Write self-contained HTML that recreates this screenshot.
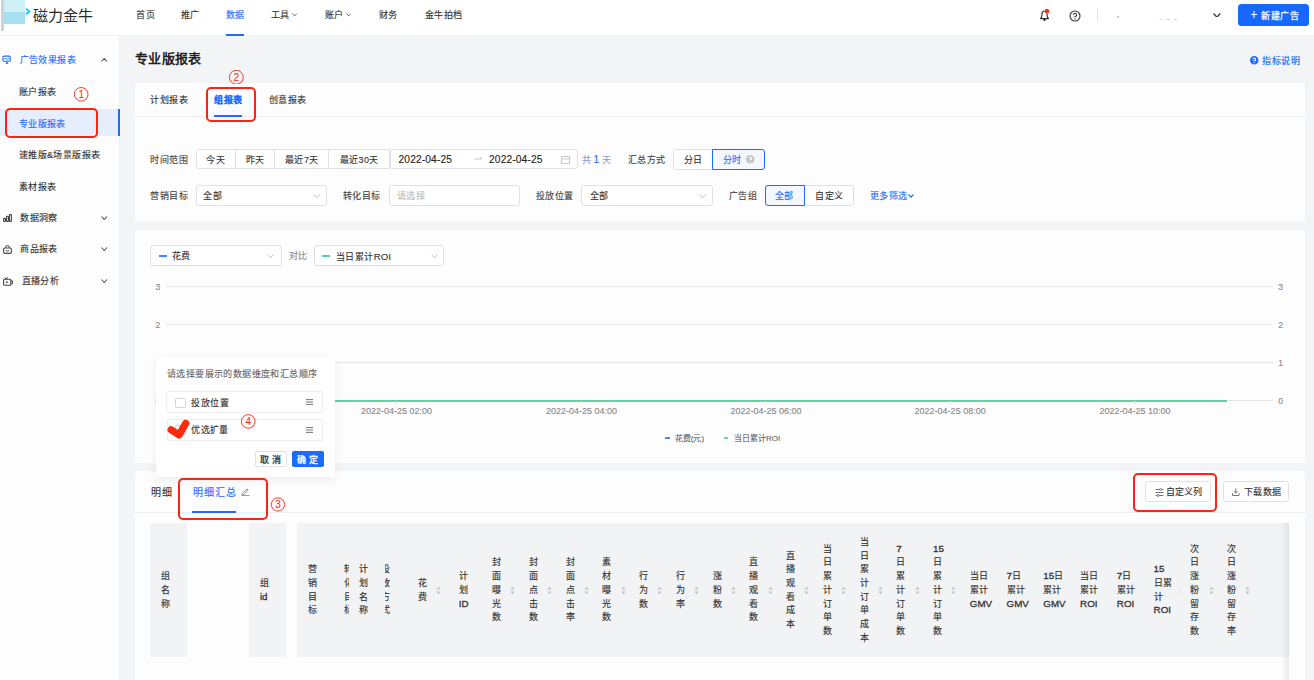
<!DOCTYPE html>
<html lang="zh-CN">
<head>
<meta charset="utf-8">
<style>
*{margin:0;padding:0;box-sizing:border-box}
html,body{width:1314px;height:680px;overflow:hidden;background:#f3f4f6;font-family:"Liberation Sans",sans-serif;color:#333}
.a{position:absolute;white-space:nowrap}
.a{-webkit-text-stroke:0.12px currentColor}
</style>
</head>
<body>
<div class="a" style="left:0.00px;top:0.00px;width:1314.00px;height:35.00px;background:#fff"></div>
<div class="a" style="left:0.00px;top:35.00px;width:1314.00px;height:1.00px;background:#eef0f3"></div>
<div class="a" style="left:1.00px;top:0.00px;width:3.00px;height:31.00px;background:#cfd3d8"></div>
<div class="a" style="left:4.00px;top:0.00px;width:21.00px;height:12.00px;background:#cdf1f7"></div>
<div class="a" style="left:4.00px;top:12.00px;width:21.00px;height:12.00px;background:#a6dff1"></div>
<svg class="a" style="left:24.5px;top:7.5px" width="6" height="7" viewBox="0 0 6 7"><path d="M1 0.8 L4.6 3.5 L1 6.2" fill="none" stroke="#14c6f5" stroke-width="1.7"/></svg>
<div class="a" style="left:33.20px;top:8.42px;font-size:15px;line-height:15px;color:#2a2a2a;letter-spacing:0.05px;-webkit-text-stroke:0">磁力金牛</div>
<div class="a" style="left:136.40px;top:10.96px;font-size:9px;line-height:9px;color:#333;letter-spacing:0.45px;">首页</div>
<div class="a" style="left:181.00px;top:10.96px;font-size:9px;line-height:9px;color:#333;letter-spacing:0.45px;">推广</div>
<div class="a" style="left:225.80px;top:10.96px;font-size:9px;line-height:9px;color:#1f6bff;letter-spacing:0.45px;">数据</div>
<div class="a" style="left:225.80px;top:34.00px;width:18.50px;height:2.00px;background:#1f6bff"></div>
<div class="a" style="left:271.00px;top:10.96px;font-size:9px;line-height:9px;color:#333;letter-spacing:0.45px;">工具</div>
<svg class="a" style="left:291.50px;top:12.90px" width="5.4" height="3.4"><path d="M0.5 0.5 L2.7 2.9 L4.9 0.5" fill="none" stroke="#555" stroke-width="0.9"/></svg>
<div class="a" style="left:325.00px;top:10.96px;font-size:9px;line-height:9px;color:#333;letter-spacing:0.45px;">账户</div>
<svg class="a" style="left:345.70px;top:12.90px" width="5.4" height="3.4"><path d="M0.5 0.5 L2.7 2.9 L4.9 0.5" fill="none" stroke="#555" stroke-width="0.9"/></svg>
<div class="a" style="left:379.00px;top:10.96px;font-size:9px;line-height:9px;color:#333;letter-spacing:0.45px;">财务</div>
<div class="a" style="left:425.00px;top:10.96px;font-size:9px;line-height:9px;color:#333;letter-spacing:0.45px;">金牛拍档</div>
<svg class="a" style="left:1039px;top:9px" width="12" height="13" viewBox="0 0 12 13"><path d="M1.2 9.6 H9.8 M1.2 9.6 Q2.9 8.6 2.9 6.6 V5.2 Q3 2.3 5.4 1.8 M8.1 4.4 V6.6 Q8.1 8.6 9.8 9.6 M4.4 10.5 L5.5 11.5 L6.6 10.5" fill="none" stroke="#333" stroke-width="1.15" stroke-linejoin="round"/><circle cx="7.9" cy="2.3" r="2.4" fill="#f5311f"/></svg>
<svg class="a" style="left:1068.5px;top:9.5px" width="12" height="12" viewBox="0 0 12 12"><circle cx="6" cy="6" r="5" fill="none" stroke="#333" stroke-width="1.1"/><path d="M4.4 4.8 A1.6 1.6 0 1 1 6 6.5 V7.3" fill="none" stroke="#333" stroke-width="1.1"/><circle cx="6" cy="8.9" r="0.7" fill="#333"/></svg>
<div class="a" style="left:1097.00px;top:7.60px;width:1.00px;height:14.80px;background:#e3e5e8"></div>
<div class="a" style="left:1117px;top:16px;width:1.5px;height:1.5px;background:#ccc"></div>
<div class="a" style="left:1159px;top:18.5px;width:3px;height:1px;background:#e6e6e6"></div>
<div class="a" style="left:1166px;top:18.5px;width:4px;height:1px;background:#d8d8d8"></div>
<div class="a" style="left:1173px;top:18.5px;width:4px;height:1px;background:#d8d8d8"></div>
<svg class="a" style="left:1212.90px;top:12.70px" width="7.8" height="4.6"><path d="M0.5 0.5 L3.9 4.1 L7.3 0.5" fill="none" stroke="#333" stroke-width="1.3"/></svg>
<div class="a" style="left:1238.30px;top:4.20px;width:70.80px;height:21.60px;background:#1668ff;border-radius:3.5px"></div>
<svg class="a" style="left:1251px;top:11.3px" width="6" height="7" viewBox="0 0 6 7"><path d="M3 0 V7 M0 3.5 H6" stroke="#fff" stroke-width="1.1"/></svg>
<div class="a" style="left:1261.10px;top:11.67px;font-size:9px;line-height:9px;color:#fff;letter-spacing:0.5px;-webkit-text-stroke:0.25px #fff">新建广告</div>
<div class="a" style="left:0.00px;top:36.00px;width:119.00px;height:644.00px;background:#fdfdfd"></div>
<div class="a" style="left:119.00px;top:36.00px;width:1.00px;height:644.00px;background:#f0f1f4"></div>
<div class="a" style="left:0.00px;top:109.00px;width:119.50px;height:27.00px;background:#e6edfd"></div>
<div class="a" style="left:117.60px;top:109.00px;width:2.00px;height:27.00px;background:#1f6bff"></div>
<svg class="a" style="left:2.2px;top:54.5px" width="10" height="10" viewBox="0 0 10 10"><rect x="0.95" y="1.1" width="7.3" height="5.2" rx="1" fill="none" stroke="#1f6bff" stroke-width="1.1"/><path d="M2.3 4.1 Q3.3 2.9 4.3 3.8 Q5.3 4.6 6.9 3.7" fill="none" stroke="#1f6bff" stroke-width="1"/><path d="M4.4 6.3 L3.4 8.9 H6.4 L5.4 6.3 Z" fill="#1f6bff" opacity="0.8"/></svg>
<div class="a" style="left:19.50px;top:56.41px;font-size:9px;line-height:9px;color:#1f6bff;letter-spacing:0.45px;">广告效果报表</div>
<svg class="a" style="left:101.00px;top:57.80px" width="6.5" height="4"><path d="M0.5 3.5 L3.25 0.5 L6.0 3.5" fill="none" stroke="#555" stroke-width="1.1"/></svg>
<div class="a" style="left:18.70px;top:87.71px;font-size:9px;line-height:9px;color:#333;letter-spacing:0.45px;">账户报表</div>
<div class="a" style="left:18.70px;top:119.71px;font-size:9px;line-height:9px;color:#1f6bff;letter-spacing:0.45px;">专业版报表</div>
<div class="a" style="left:18.70px;top:151.27px;font-size:9px;line-height:9px;color:#333;letter-spacing:0.45px;">速推版&amp;场景版报表</div>
<div class="a" style="left:18.70px;top:182.81px;font-size:9px;line-height:9px;color:#333;letter-spacing:0.45px;">素材报表</div>
<svg class="a" style="left:2.8px;top:213.5px" width="9" height="8" viewBox="0 0 9 8"><rect x="0.6" y="4.4" width="1.9" height="3" rx="0.5" fill="none" stroke="#444" stroke-width="1.1"/><rect x="3.55" y="2.4" width="1.9" height="5" rx="0.5" fill="none" stroke="#444" stroke-width="1.1"/><rect x="6.5" y="0.6" width="1.9" height="6.8" rx="0.5" fill="none" stroke="#444" stroke-width="1.1"/></svg>
<div class="a" style="left:20.10px;top:214.02px;font-size:9px;line-height:9px;color:#333;letter-spacing:0.45px;">数据洞察</div>
<svg class="a" style="left:101.30px;top:215.50px" width="6.5" height="4"><path d="M0.5 0.5 L3.25 3.5 L6.0 0.5" fill="none" stroke="#555" stroke-width="1.1"/></svg>
<svg class="a" style="left:3px;top:244.5px" width="9" height="9" viewBox="0 0 9 9"><rect x="0.6" y="3" width="7.8" height="5.4" rx="1.3" fill="none" stroke="#444" stroke-width="1.1"/><path d="M2.6 3 V2.4 A1.9 1.9 0 0 1 6.4 2.4 V3 M2.9 5.4 Q4.5 6.9 6.1 5.4" fill="none" stroke="#444" stroke-width="1"/></svg>
<div class="a" style="left:20.10px;top:245.31px;font-size:9px;line-height:9px;color:#333;letter-spacing:0.45px;">商品报表</div>
<svg class="a" style="left:101.30px;top:246.80px" width="6.5" height="4"><path d="M0.5 0.5 L3.25 3.5 L6.0 0.5" fill="none" stroke="#555" stroke-width="1.1"/></svg>
<svg class="a" style="left:3px;top:276.5px" width="10" height="9" viewBox="0 0 10 9"><rect x="0.6" y="2.3" width="7.2" height="6" rx="0.8" fill="none" stroke="#444" stroke-width="1.1"/><path d="M2 0.3 L3.3 2.3 M4.6 0.3 L3.3 2.3 M8 3.8 H9.4 V6.8 H8" fill="none" stroke="#444" stroke-width="1"/><path d="M3.1 4 L5.4 5.3 L3.1 6.6 Z" fill="#444"/></svg>
<div class="a" style="left:21.60px;top:277.12px;font-size:9px;line-height:9px;color:#333;letter-spacing:0.45px;">直播分析</div>
<svg class="a" style="left:101.30px;top:278.50px" width="6.5" height="4"><path d="M0.5 0.5 L3.25 3.5 L6.0 0.5" fill="none" stroke="#555" stroke-width="1.1"/></svg>
<div class="a" style="left:134.90px;top:51.65px;font-size:13px;line-height:13px;color:#222;font-weight:bold;letter-spacing:0.4px;-webkit-text-stroke:0">专业版报表</div>
<svg class="a" style="left:1250.2px;top:56.4px" width="8.5" height="8.5" viewBox="0 0 9 9"><circle cx="4.5" cy="4.5" r="4.5" fill="#1f6bff"/><path d="M3.1 3.6 A1.4 1.4 0 1 1 4.5 5 V5.6" fill="none" stroke="#fff" stroke-width="1.1"/><circle cx="4.5" cy="7.1" r="0.6" fill="#fff"/></svg>
<div class="a" style="left:1262.20px;top:57.21px;font-size:9px;line-height:9px;color:#1f6bff;letter-spacing:0.45px;-webkit-text-stroke:0.2px currentColor">指标说明</div>
<div class="a" style="left:134.50px;top:82.60px;width:1170.80px;height:139.20px;background:#fdfdfd;border-radius:2px"></div>
<div class="a" style="left:134.50px;top:116.00px;width:1170.80px;height:1.00px;background:#eceef1"></div>
<div class="a" style="left:150.30px;top:96.46px;font-size:9px;line-height:9px;color:#333;letter-spacing:0.45px;">计划报表</div>
<div class="a" style="left:214.30px;top:96.46px;font-size:9px;line-height:9px;color:#1f6bff;font-weight:bold;letter-spacing:0.45px;">组报表</div>
<div class="a" style="left:214.30px;top:115.30px;width:27.70px;height:2.00px;background:#1f6bff"></div>
<div class="a" style="left:268.70px;top:96.46px;font-size:9px;line-height:9px;color:#333;letter-spacing:0.45px;">创意报表</div>
<div class="a" style="left:150.30px;top:155.72px;font-size:9px;line-height:9px;color:#444;letter-spacing:0.45px;">时间范围</div>
<div class="a" style="left:195.50px;top:149.20px;width:194.00px;height:20.20px;background:#fff;border:1px solid #dfe1e6;border-radius:3px 0 0 3px"></div>
<div class="a" style="left:234.70px;top:149.20px;width:1.00px;height:20.20px;background:#dfe1e6"></div>
<div class="a" style="left:274.00px;top:149.20px;width:1.00px;height:20.20px;background:#dfe1e6"></div>
<div class="a" style="left:328.10px;top:149.20px;width:1.00px;height:20.20px;background:#dfe1e6"></div>
<div class="a" style="left:206.40px;top:155.72px;font-size:9px;line-height:9px;color:#333;letter-spacing:0.45px;">今天</div>
<div class="a" style="left:245.60px;top:155.72px;font-size:9px;line-height:9px;color:#333;letter-spacing:0.45px;">昨天</div>
<div class="a" style="left:285.00px;top:155.72px;font-size:9px;line-height:9px;color:#333;letter-spacing:0.45px;">最近7天</div>
<div class="a" style="left:339.70px;top:155.72px;font-size:9px;line-height:9px;color:#333;letter-spacing:0.45px;">最近30天</div>
<div class="a" style="left:389.50px;top:149.10px;width:188.10px;height:20.00px;background:#fff;border:1px solid #dfe1e6;border-radius:3px"></div>
<div class="a" style="left:398.50px;top:155.16px;font-size:10.2px;line-height:10.2px;color:#222;letter-spacing:0.15px">2022-04-25</div>
<svg class="a" style="left:473.5px;top:156px" width="9" height="6" viewBox="0 0 9 6"><path d="M0.5 3 H8 M6 1 L8 3" fill="none" stroke="#c8c8c8" stroke-width="1"/></svg>
<div class="a" style="left:489.00px;top:155.16px;font-size:10.2px;line-height:10.2px;color:#222;letter-spacing:0.15px">2022-04-25</div>
<svg class="a" style="left:561px;top:155.5px" width="9" height="8" viewBox="0 0 9 8"><rect x="0.5" y="0.5" width="8" height="7" fill="none" stroke="#c8c8c8" stroke-width="1"/><path d="M0.5 3 H8.5" stroke="#c8c8c8" stroke-width="1"/></svg>
<div class="a" style="left:582.30px;top:155.72px;font-size:9px;line-height:9px;color:#8aa0cf;letter-spacing:0.45px;">共</div>
<div class="a" style="left:593.50px;top:155.25px;font-size:10px;line-height:10px;color:#1f6bff;">1</div>
<div class="a" style="left:602.00px;top:155.72px;font-size:9px;line-height:9px;color:#8aa0cf;letter-spacing:0.45px;">天</div>
<div class="a" style="left:628.00px;top:155.72px;font-size:9px;line-height:9px;color:#444;letter-spacing:0.45px;">汇总方式</div>
<div class="a" style="left:673.00px;top:149.00px;width:40.00px;height:20.50px;background:#fff;border:1px solid #dfe1e6;border-radius:3px 0 0 3px"></div>
<div class="a" style="left:712.30px;top:149.00px;width:52.70px;height:20.50px;background:#f4f7fe;border:1px solid #1f6bff;border-radius:0 3px 3px 0"></div>
<div class="a" style="left:683.70px;top:155.72px;font-size:9px;line-height:9px;color:#333;letter-spacing:0.45px;">分日</div>
<div class="a" style="left:723.00px;top:155.72px;font-size:9px;line-height:9px;color:#1f6bff;letter-spacing:0.45px;">分时</div>
<svg class="a" style="left:746px;top:155px" width="8.5" height="8.5" viewBox="0 0 9 9"><circle cx="4.5" cy="4.5" r="4.5" fill="#c4c4c4"/><path d="M3.1 3.6 A1.4 1.4 0 1 1 4.5 5 V5.6" fill="none" stroke="#fff" stroke-width="1.1"/><circle cx="4.5" cy="7.1" r="0.6" fill="#fff"/></svg>
<div class="a" style="left:150.30px;top:192.22px;font-size:9px;line-height:9px;color:#444;letter-spacing:0.45px;">营销目标</div>
<div class="a" style="left:195.70px;top:185.30px;width:131.10px;height:21.00px;background:#fff;border:1px solid #dfe1e6;border-radius:3px"></div>
<div class="a" style="left:203.40px;top:192.22px;font-size:9px;line-height:9px;color:#333;letter-spacing:0.45px;">全部</div>
<svg class="a" style="left:313.00px;top:194.00px" width="7" height="4.2"><path d="M0.5 0.5 L3.5 3.7 L6.5 0.5" fill="none" stroke="#c0c0c0" stroke-width="1"/></svg>
<div class="a" style="left:342.80px;top:192.22px;font-size:9px;line-height:9px;color:#444;letter-spacing:0.45px;">转化目标</div>
<div class="a" style="left:389.00px;top:185.30px;width:130.50px;height:20.30px;background:#fff;border:1px solid #dfe1e6;border-radius:3px"></div>
<div class="a" style="left:396.70px;top:192.22px;font-size:9px;line-height:9px;color:#bbb;letter-spacing:0.45px;">请选择</div>
<div class="a" style="left:536.00px;top:192.22px;font-size:9px;line-height:9px;color:#444;letter-spacing:0.45px;">投放位置</div>
<div class="a" style="left:581.40px;top:185.30px;width:131.20px;height:20.70px;background:#fff;border:1px solid #dfe1e6;border-radius:3px"></div>
<div class="a" style="left:590.00px;top:192.22px;font-size:9px;line-height:9px;color:#333;letter-spacing:0.45px;">全部</div>
<svg class="a" style="left:698.50px;top:194.00px" width="7" height="4.2"><path d="M0.5 0.5 L3.5 3.7 L6.5 0.5" fill="none" stroke="#c0c0c0" stroke-width="1"/></svg>
<div class="a" style="left:728.80px;top:192.22px;font-size:9px;line-height:9px;color:#444;letter-spacing:0.45px;">广告组</div>
<div class="a" style="left:804.00px;top:185.20px;width:49.50px;height:21.00px;background:#fff;border:1px solid #dfe1e6;border-radius:0 3px 3px 0"></div>
<div class="a" style="left:765.20px;top:185.20px;width:39.60px;height:21.00px;background:#f4f7fe;border:1px solid #1f6bff;border-radius:3px 0 0 3px"></div>
<div class="a" style="left:775.00px;top:192.22px;font-size:9px;line-height:9px;color:#1f6bff;letter-spacing:0.45px;">全部</div>
<div class="a" style="left:815.40px;top:192.22px;font-size:9px;line-height:9px;color:#333;letter-spacing:0.45px;">自定义</div>
<div class="a" style="left:869.80px;top:192.22px;font-size:9px;line-height:9px;color:#1f6bff;letter-spacing:0.45px;">更多筛选</div>
<svg class="a" style="left:908.00px;top:194.30px" width="6" height="3.6"><path d="M0.5 0.5 L3.0 3.1 L5.5 0.5" fill="none" stroke="#1f6bff" stroke-width="1.1"/></svg>
<div class="a" style="left:134.50px;top:229.60px;width:1170.80px;height:233.40px;background:#fdfdfd;border-radius:2px"></div>
<div class="a" style="left:150.30px;top:245.40px;width:131.30px;height:20.80px;background:#fff;border:1px solid #dfe1e6;border-radius:3px"></div>
<div class="a" style="left:159.00px;top:255.20px;width:8.00px;height:1.70px;background:#3f86ff"></div>
<div class="a" style="left:171.90px;top:252.42px;font-size:9px;line-height:9px;color:#333;letter-spacing:0.45px;">花费</div>
<svg class="a" style="left:266.90px;top:254.00px" width="7" height="4.2"><path d="M0.5 0.5 L3.5 3.7 L6.5 0.5" fill="none" stroke="#c0c0c0" stroke-width="1"/></svg>
<div class="a" style="left:288.80px;top:252.42px;font-size:9px;line-height:9px;color:#888;letter-spacing:0.45px;">对比</div>
<div class="a" style="left:314.20px;top:245.20px;width:130.10px;height:21.30px;background:#fff;border:1px solid #dfe1e6;border-radius:3px"></div>
<div class="a" style="left:322.00px;top:255.20px;width:8.40px;height:1.70px;background:#5fcfa3"></div>
<div class="a" style="left:336.00px;top:252.42px;font-size:9px;line-height:9px;color:#333;letter-spacing:0.45px;">当日累计<span style="letter-spacing:0;font-size:9.6px">ROI</span></div>
<svg class="a" style="left:430.50px;top:254.00px" width="7" height="4.2"><path d="M0.5 0.5 L3.5 3.7 L6.5 0.5" fill="none" stroke="#c0c0c0" stroke-width="1"/></svg>
<div class="a" style="left:166.40px;top:285.60px;width:1106.40px;height:1.00px;background:#e3e4e7"></div>
<div class="a" style="left:155.60px;top:282.60px;font-size:8.6px;line-height:8.6px;color:#888;">3</div>
<div class="a" style="left:1278.20px;top:282.60px;font-size:8.6px;line-height:8.6px;color:#888;">3</div>
<div class="a" style="left:166.40px;top:323.70px;width:1106.40px;height:1.00px;background:#e3e4e7"></div>
<div class="a" style="left:155.60px;top:320.70px;font-size:8.6px;line-height:8.6px;color:#888;">2</div>
<div class="a" style="left:1278.20px;top:320.70px;font-size:8.6px;line-height:8.6px;color:#888;">2</div>
<div class="a" style="left:166.40px;top:361.60px;width:1106.40px;height:1.00px;background:#e3e4e7"></div>
<div class="a" style="left:155.60px;top:358.60px;font-size:8.6px;line-height:8.6px;color:#888;">1</div>
<div class="a" style="left:1278.20px;top:358.60px;font-size:8.6px;line-height:8.6px;color:#888;">1</div>
<div class="a" style="left:166.40px;top:400.10px;width:1106.40px;height:1.00px;background:#e3e4e7"></div>
<div class="a" style="left:155.60px;top:397.10px;font-size:8.6px;line-height:8.6px;color:#888;">0</div>
<div class="a" style="left:1278.20px;top:397.10px;font-size:8.6px;line-height:8.6px;color:#888;">0</div>
<div class="a" style="left:166.40px;top:399.60px;width:1061.00px;height:2.00px;background:#66cfa5"></div>
<div class="a" style="left:396.20px;top:401.00px;width:1.00px;height:3.00px;background:#ddd"></div>
<div class="a" style="left:580.70px;top:401.00px;width:1.00px;height:3.00px;background:#ddd"></div>
<div class="a" style="left:765.20px;top:401.00px;width:1.00px;height:3.00px;background:#ddd"></div>
<div class="a" style="left:949.70px;top:401.00px;width:1.00px;height:3.00px;background:#ddd"></div>
<div class="a" style="left:1134.70px;top:401.00px;width:1.00px;height:3.00px;background:#ddd"></div>
<div class="a" style="left:361.00px;top:407.12px;font-size:9.0px;line-height:9.0px;color:#888;">2022-04-25 02:00</div>
<div class="a" style="left:546.00px;top:407.12px;font-size:9.0px;line-height:9.0px;color:#888;">2022-04-25 04:00</div>
<div class="a" style="left:730.40px;top:407.12px;font-size:9.0px;line-height:9.0px;color:#888;">2022-04-25 06:00</div>
<div class="a" style="left:914.60px;top:407.12px;font-size:9.0px;line-height:9.0px;color:#888;">2022-04-25 08:00</div>
<div class="a" style="left:1099.40px;top:407.12px;font-size:9.0px;line-height:9.0px;color:#888;">2022-04-25 10:00</div>
<div class="a" style="left:665.00px;top:437.40px;width:5.00px;height:1.30px;background:#4a8df8"></div>
<div class="a" style="left:674.80px;top:435.08px;font-size:8px;line-height:8px;color:#666;">花费(元)</div>
<div class="a" style="left:723.50px;top:437.40px;width:4.50px;height:1.30px;background:#6fd3ab"></div>
<div class="a" style="left:734.00px;top:435.08px;font-size:8px;line-height:8px;color:#666;">当日累计ROI</div>
<div class="a" style="left:134.50px;top:471.00px;width:1170.80px;height:219.00px;background:#fdfdfd;border-radius:2px"></div>
<div class="a" style="left:134.50px;top:512.00px;width:1170.80px;height:1.00px;background:#eef0f2"></div>
<div class="a" style="left:150.70px;top:487.65px;font-size:10px;line-height:10px;color:#333;letter-spacing:1.0px;">明细</div>
<div class="a" style="left:192.90px;top:487.65px;font-size:10px;line-height:10px;color:#1f6bff;letter-spacing:1.0px;">明细汇总</div>
<svg class="a" style="left:241px;top:487px" width="9" height="9" viewBox="0 0 9 9"><path d="M1 6.8 L6 1.8 L7.2 3 L2.2 8 H1 Z M0.5 8.6 H8.5" fill="none" stroke="#888" stroke-width="0.9"/></svg>
<div class="a" style="left:192.40px;top:510.60px;width:43.60px;height:2.00px;background:#1f6bff"></div>
<div class="a" style="left:1145.40px;top:481.40px;width:66.10px;height:20.20px;background:#fff;border:1px solid #dfe1e6;border-radius:3px"></div>
<svg class="a" style="left:1154.5px;top:487.5px" width="9" height="9" viewBox="0 0 9 9"><path d="M0.5 1.5 H8.5 M0.5 4.5 H8.5 M0.5 7.5 H8.5" stroke="#666" stroke-width="0.9"/><circle cx="5.5" cy="1.5" r="1" fill="#fff" stroke="#666" stroke-width="0.8"/><circle cx="3" cy="7.5" r="1" fill="#fff" stroke="#666" stroke-width="0.8"/></svg>
<div class="a" style="left:1165.80px;top:488.42px;font-size:9px;line-height:9px;color:#333;letter-spacing:0.2px;">自定义列</div>
<div class="a" style="left:1222.60px;top:481.40px;width:66.90px;height:20.20px;background:#fff;border:1px solid #dfe1e6;border-radius:3px"></div>
<svg class="a" style="left:1232px;top:487.5px" width="7.5" height="8" viewBox="0 0 7.5 8"><path d="M3.75 0.3 V5 M1.8 3.2 L3.75 5 L5.7 3.2 M0.5 5.2 V7.5 H7 V5.2" fill="none" stroke="#666" stroke-width="0.9"/></svg>
<div class="a" style="left:1244.00px;top:488.42px;font-size:9px;line-height:9px;color:#333;letter-spacing:0.3px;">下载数据</div>
<div class="a" style="left:150.30px;top:523.40px;width:37.00px;height:133.60px;background:#f2f3f5"></div>
<div class="a" style="left:249.10px;top:523.40px;width:37.00px;height:133.60px;background:#f2f3f5"></div>
<div class="a" style="left:297.10px;top:523.40px;width:991.90px;height:133.60px;background:#f2f3f5"></div>
<div class="a" style="left:1281.00px;top:523.40px;width:8.00px;height:156.60px;background:linear-gradient(to right,rgba(0,0,0,0),rgba(0,0,0,0.075))"></div>
<div class="a" style="left:161.00px;top:570.15px;font-size:9px;line-height:13.7px;color:#333;-webkit-text-stroke:0.15px #333;">组<br>名<br>称</div>
<div class="a" style="left:259.90px;top:577.00px;font-size:9px;line-height:13.7px;color:#333;-webkit-text-stroke:0.15px #333;">组<br><span style="font-size:9.8px;line-height:0;-webkit-text-stroke:0.3px #333">id</span></div>
<div class="a" style="left:307.80px;top:563.30px;font-size:9px;line-height:13.7px;color:#333;-webkit-text-stroke:0.15px #333;">营<br>销<br>目<br>标</div>
<div class="a" style="left:343.00px;top:563.30px;width:6.20px;height:54.80px;overflow:hidden"><div style="position:absolute;left:1.00px;top:0;font-size:9px;line-height:13.7px;color:#333;-webkit-text-stroke:0.15px #333;white-space:nowrap">转<br>化<br>目<br>标</div></div>
<div class="a" style="left:359.20px;top:563.30px;font-size:9px;line-height:13.7px;color:#333;-webkit-text-stroke:0.15px #333;">计<br>划<br>名<br>称</div>
<div class="a" style="left:385.00px;top:563.30px;width:7.00px;height:54.80px;overflow:hidden"><div style="position:absolute;left:-4.00px;top:0;font-size:9px;line-height:13.7px;color:#333;-webkit-text-stroke:0.15px #333;white-space:nowrap">投<br>放<br>方<br>式</div></div>
<div class="a" style="left:418.00px;top:577.00px;font-size:9px;line-height:13.7px;color:#333;-webkit-text-stroke:0.15px #333;">花<br>费</div>
<svg class="a" style="left:436.40px;top:586px" width="5" height="9" viewBox="0 0 5 9"><path d="M0.3 3.6 L2.5 0.8 L4.7 3.6 Z M0.3 5.4 L2.5 8.2 L4.7 5.4 Z" fill="#c4c5c9"/></svg>
<div class="a" style="left:458.80px;top:570.15px;font-size:9px;line-height:13.7px;color:#333;-webkit-text-stroke:0.15px #333;">计<br>划<br><span style="font-size:9.8px;line-height:0;-webkit-text-stroke:0.3px #333">ID</span></div>
<div class="a" style="left:492.00px;top:556.45px;font-size:9px;line-height:13.7px;color:#333;-webkit-text-stroke:0.15px #333;">封<br>面<br>曝<br>光<br>数</div>
<svg class="a" style="left:510.30px;top:586px" width="5" height="9" viewBox="0 0 5 9"><path d="M0.3 3.6 L2.5 0.8 L4.7 3.6 Z M0.3 5.4 L2.5 8.2 L4.7 5.4 Z" fill="#c4c5c9"/></svg>
<div class="a" style="left:528.75px;top:556.45px;font-size:9px;line-height:13.7px;color:#333;-webkit-text-stroke:0.15px #333;">封<br>面<br>点<br>击<br>数</div>
<svg class="a" style="left:547.05px;top:586px" width="5" height="9" viewBox="0 0 5 9"><path d="M0.3 3.6 L2.5 0.8 L4.7 3.6 Z M0.3 5.4 L2.5 8.2 L4.7 5.4 Z" fill="#c4c5c9"/></svg>
<div class="a" style="left:565.51px;top:556.45px;font-size:9px;line-height:13.7px;color:#333;-webkit-text-stroke:0.15px #333;">封<br>面<br>点<br>击<br>率</div>
<svg class="a" style="left:583.81px;top:586px" width="5" height="9" viewBox="0 0 5 9"><path d="M0.3 3.6 L2.5 0.8 L4.7 3.6 Z M0.3 5.4 L2.5 8.2 L4.7 5.4 Z" fill="#c4c5c9"/></svg>
<div class="a" style="left:602.26px;top:556.45px;font-size:9px;line-height:13.7px;color:#333;-webkit-text-stroke:0.15px #333;">素<br>材<br>曝<br>光<br>数</div>
<svg class="a" style="left:620.56px;top:586px" width="5" height="9" viewBox="0 0 5 9"><path d="M0.3 3.6 L2.5 0.8 L4.7 3.6 Z M0.3 5.4 L2.5 8.2 L4.7 5.4 Z" fill="#c4c5c9"/></svg>
<div class="a" style="left:639.02px;top:570.15px;font-size:9px;line-height:13.7px;color:#333;-webkit-text-stroke:0.15px #333;">行<br>为<br>数</div>
<svg class="a" style="left:657.32px;top:586px" width="5" height="9" viewBox="0 0 5 9"><path d="M0.3 3.6 L2.5 0.8 L4.7 3.6 Z M0.3 5.4 L2.5 8.2 L4.7 5.4 Z" fill="#c4c5c9"/></svg>
<div class="a" style="left:675.77px;top:570.15px;font-size:9px;line-height:13.7px;color:#333;-webkit-text-stroke:0.15px #333;">行<br>为<br>率</div>
<svg class="a" style="left:694.07px;top:586px" width="5" height="9" viewBox="0 0 5 9"><path d="M0.3 3.6 L2.5 0.8 L4.7 3.6 Z M0.3 5.4 L2.5 8.2 L4.7 5.4 Z" fill="#c4c5c9"/></svg>
<div class="a" style="left:712.53px;top:570.15px;font-size:9px;line-height:13.7px;color:#333;-webkit-text-stroke:0.15px #333;">涨<br>粉<br>数</div>
<svg class="a" style="left:730.83px;top:586px" width="5" height="9" viewBox="0 0 5 9"><path d="M0.3 3.6 L2.5 0.8 L4.7 3.6 Z M0.3 5.4 L2.5 8.2 L4.7 5.4 Z" fill="#c4c5c9"/></svg>
<div class="a" style="left:749.29px;top:556.45px;font-size:9px;line-height:13.7px;color:#333;-webkit-text-stroke:0.15px #333;">直<br>播<br>观<br>看<br>数</div>
<svg class="a" style="left:767.59px;top:586px" width="5" height="9" viewBox="0 0 5 9"><path d="M0.3 3.6 L2.5 0.8 L4.7 3.6 Z M0.3 5.4 L2.5 8.2 L4.7 5.4 Z" fill="#c4c5c9"/></svg>
<div class="a" style="left:786.04px;top:549.60px;font-size:9px;line-height:13.7px;color:#333;-webkit-text-stroke:0.15px #333;">直<br>播<br>观<br>看<br>成<br>本</div>
<svg class="a" style="left:804.34px;top:586px" width="5" height="9" viewBox="0 0 5 9"><path d="M0.3 3.6 L2.5 0.8 L4.7 3.6 Z M0.3 5.4 L2.5 8.2 L4.7 5.4 Z" fill="#c4c5c9"/></svg>
<div class="a" style="left:822.80px;top:542.75px;font-size:9px;line-height:13.7px;color:#333;-webkit-text-stroke:0.15px #333;">当<br>日<br>累<br>计<br>订<br>单<br>数</div>
<svg class="a" style="left:841.10px;top:586px" width="5" height="9" viewBox="0 0 5 9"><path d="M0.3 3.6 L2.5 0.8 L4.7 3.6 Z M0.3 5.4 L2.5 8.2 L4.7 5.4 Z" fill="#c4c5c9"/></svg>
<div class="a" style="left:859.55px;top:535.90px;font-size:9px;line-height:13.7px;color:#333;-webkit-text-stroke:0.15px #333;">当<br>日<br>累<br>计<br>订<br>单<br>成<br>本</div>
<svg class="a" style="left:877.85px;top:586px" width="5" height="9" viewBox="0 0 5 9"><path d="M0.3 3.6 L2.5 0.8 L4.7 3.6 Z M0.3 5.4 L2.5 8.2 L4.7 5.4 Z" fill="#c4c5c9"/></svg>
<div class="a" style="left:896.31px;top:542.75px;font-size:9px;line-height:13.7px;color:#333;-webkit-text-stroke:0.15px #333;"><span style="font-size:9.8px;line-height:0;-webkit-text-stroke:0.3px #333">7</span><br>日<br>累<br>计<br>订<br>单<br>数</div>
<svg class="a" style="left:914.61px;top:586px" width="5" height="9" viewBox="0 0 5 9"><path d="M0.3 3.6 L2.5 0.8 L4.7 3.6 Z M0.3 5.4 L2.5 8.2 L4.7 5.4 Z" fill="#c4c5c9"/></svg>
<div class="a" style="left:933.06px;top:542.75px;font-size:9px;line-height:13.7px;color:#333;-webkit-text-stroke:0.15px #333;"><span style="font-size:9.8px;line-height:0;-webkit-text-stroke:0.3px #333">15</span><br>日<br>累<br>计<br>订<br>单<br>数</div>
<svg class="a" style="left:951.36px;top:586px" width="5" height="9" viewBox="0 0 5 9"><path d="M0.3 3.6 L2.5 0.8 L4.7 3.6 Z M0.3 5.4 L2.5 8.2 L4.7 5.4 Z" fill="#c4c5c9"/></svg>
<div class="a" style="left:969.82px;top:570.15px;font-size:9px;line-height:13.7px;color:#333;-webkit-text-stroke:0.15px #333;">当日<br>累计<br><span style="font-size:9.8px;line-height:0;-webkit-text-stroke:0.3px #333">GMV</span></div>
<div class="a" style="left:1006.57px;top:570.15px;font-size:9px;line-height:13.7px;color:#333;-webkit-text-stroke:0.15px #333;"><span style="font-size:9.8px;line-height:0;-webkit-text-stroke:0.3px #333">7</span>日<br>累计<br><span style="font-size:9.8px;line-height:0;-webkit-text-stroke:0.3px #333">GMV</span></div>
<div class="a" style="left:1043.33px;top:570.15px;font-size:9px;line-height:13.7px;color:#333;-webkit-text-stroke:0.15px #333;"><span style="font-size:9.8px;line-height:0;-webkit-text-stroke:0.3px #333">15</span>日<br>累计<br><span style="font-size:9.8px;line-height:0;-webkit-text-stroke:0.3px #333">GMV</span></div>
<div class="a" style="left:1080.08px;top:570.15px;font-size:9px;line-height:13.7px;color:#333;-webkit-text-stroke:0.15px #333;">当日<br>累计<br><span style="font-size:9.8px;line-height:0;-webkit-text-stroke:0.3px #333">ROI</span></div>
<div class="a" style="left:1116.84px;top:570.15px;font-size:9px;line-height:13.7px;color:#333;-webkit-text-stroke:0.15px #333;"><span style="font-size:9.8px;line-height:0;-webkit-text-stroke:0.3px #333">7</span>日<br>累计<br><span style="font-size:9.8px;line-height:0;-webkit-text-stroke:0.3px #333">ROI</span></div>
<div class="a" style="left:1153.59px;top:563.30px;font-size:9px;line-height:13.7px;color:#333;-webkit-text-stroke:0.15px #333;"><span style="font-size:9.8px;line-height:0;-webkit-text-stroke:0.3px #333">15</span><br>日累<br>计<br><span style="font-size:9.8px;line-height:0;-webkit-text-stroke:0.3px #333">ROI</span></div>
<div class="a" style="left:1190.35px;top:542.75px;font-size:9px;line-height:13.7px;color:#333;-webkit-text-stroke:0.15px #333;">次<br>日<br>涨<br>粉<br>留<br>存<br>数</div>
<svg class="a" style="left:1208.64px;top:586px" width="5" height="9" viewBox="0 0 5 9"><path d="M0.3 3.6 L2.5 0.8 L4.7 3.6 Z M0.3 5.4 L2.5 8.2 L4.7 5.4 Z" fill="#c4c5c9"/></svg>
<div class="a" style="left:1227.10px;top:542.75px;font-size:9px;line-height:13.7px;color:#333;-webkit-text-stroke:0.15px #333;">次<br>日<br>涨<br>粉<br>留<br>存<br>率</div>
<svg class="a" style="left:1245.40px;top:586px" width="5" height="9" viewBox="0 0 5 9"><path d="M0.3 3.6 L2.5 0.8 L4.7 3.6 Z M0.3 5.4 L2.5 8.2 L4.7 5.4 Z" fill="#c4c5c9"/></svg>
<div class="a" style="left:1104.70px;top:587.50px;width:1.00px;height:1.50px;background:#dcdde1"></div>
<div class="a" style="left:1104.70px;top:591.00px;width:1.00px;height:1.50px;background:#dcdde1"></div>
<div class="a" style="left:1141.20px;top:587.50px;width:1.00px;height:1.50px;background:#dcdde1"></div>
<div class="a" style="left:1141.20px;top:591.00px;width:1.00px;height:1.50px;background:#dcdde1"></div>
<div class="a" style="left:1178.50px;top:587.50px;width:1.00px;height:1.50px;background:#dcdde1"></div>
<div class="a" style="left:1178.50px;top:591.00px;width:1.00px;height:1.50px;background:#dcdde1"></div>
<div class="a" style="left:156.00px;top:357.10px;width:178.70px;height:119.80px;background:#fff;border-radius:3px;box-shadow:0 3px 10px rgba(0,0,0,0.07)"></div>
<div class="a" style="left:167.10px;top:370.12px;font-size:9px;line-height:9px;color:#666;letter-spacing:0.4px;">请选择要展示的数据维度和汇总顺序</div>
<div class="a" style="left:166.40px;top:391.30px;width:156.60px;height:22.00px;background:#fff;border:1px solid #eceef1;border-radius:2px"></div>
<div class="a" style="left:175.20px;top:397.50px;width:10.60px;height:10.30px;background:#fff;border:1px solid #cfd3da;border-radius:1.5px"></div>
<div class="a" style="left:191.30px;top:399.01px;font-size:9px;line-height:9px;color:#333;letter-spacing:0.45px;">投放位置</div>
<svg class="a" style="left:306.4px;top:399px" width="7" height="6" viewBox="0 0 7 6"><path d="M0 0.6 H7 M0 3 H7 M0 5.4 H7" stroke="#666" stroke-width="0.9"/></svg>
<div class="a" style="left:166.80px;top:419.00px;width:156.20px;height:21.50px;background:#fff;border:1px solid #eceef1;border-radius:2px"></div>
<div class="a" style="left:175.20px;top:424.80px;width:10.60px;height:10.30px;background:#fff;border:1px solid #cfd3da;border-radius:1.5px"></div>
<div class="a" style="left:191.10px;top:426.22px;font-size:9px;line-height:9px;color:#333;letter-spacing:0.45px;">优选扩量</div>
<svg class="a" style="left:306.4px;top:426.8px" width="7" height="6" viewBox="0 0 7 6"><path d="M0 0.6 H7 M0 3 H7 M0 5.4 H7" stroke="#666" stroke-width="0.9"/></svg>
<div class="a" style="left:255.20px;top:451.20px;width:31.50px;height:15.80px;background:#fff;border:1px solid #dfe1e6;border-radius:2px"></div>
<div class="a" style="left:259.80px;top:455.72px;font-size:9px;line-height:9px;color:#333;letter-spacing:3.2px;-webkit-text-stroke:0.3px #333">取消</div>
<div class="a" style="left:292.40px;top:451.20px;width:32.00px;height:15.80px;background:#1a6bff;border-radius:2px"></div>
<div class="a" style="left:297.20px;top:455.72px;font-size:9px;line-height:9px;color:#fff;letter-spacing:3.2px;-webkit-text-stroke:0.3px #fff">确定</div>
<div class="a" style="left:4.80px;top:107.70px;width:93.70px;height:30.20px;border:2.2px solid #fb2410;border-radius:5px"></div>
<div class="a" style="left:206.20px;top:86.80px;width:49.40px;height:35.50px;border:2.2px solid #fb2410;border-radius:5px"></div>
<div class="a" style="left:178.30px;top:478.00px;width:89.30px;height:41.50px;border:2.2px solid #fb2410;border-radius:5px"></div>
<div class="a" style="left:1133.30px;top:473.00px;width:83.40px;height:39.40px;border:2.2px solid #fb2410;border-radius:5px"></div>
<svg class="a" style="left:72.60px;top:87.00px" width="16.40" height="14.60"><circle cx="8.20" cy="7.30" r="6.80" fill="none" stroke="#fb2410" stroke-width="0.9"/><text x="8.20" y="10.90" text-anchor="middle" font-family="Liberation Sans" font-size="10" fill="#fb2410">1</text></svg>
<svg class="a" style="left:227.50px;top:69.90px" width="16.70" height="14.50"><circle cx="8.35" cy="7.25" r="6.95" fill="none" stroke="#fb2410" stroke-width="0.9"/><text x="8.35" y="10.85" text-anchor="middle" font-family="Liberation Sans" font-size="10" fill="#fb2410">2</text></svg>
<svg class="a" style="left:269.80px;top:496.90px" width="16.00" height="15.00"><circle cx="8.00" cy="7.50" r="6.60" fill="none" stroke="#fb2410" stroke-width="0.9"/><text x="8.00" y="11.10" text-anchor="middle" font-family="Liberation Sans" font-size="10" fill="#fb2410">3</text></svg>
<svg class="a" style="left:239.80px;top:413.90px" width="16.40" height="14.80"><circle cx="8.20" cy="7.40" r="6.80" fill="none" stroke="#fb2410" stroke-width="0.9"/><text x="8.20" y="11.00" text-anchor="middle" font-family="Liberation Sans" font-size="10" fill="#fb2410">4</text></svg>
<svg class="a" style="left:160px;top:415px" width="35" height="28" viewBox="0 0 35 28"><path d="M11.1 14.7 L19.1 19.9 L25.8 8.3" fill="none" stroke="#ff2a0c" stroke-width="7.2" stroke-linecap="round" stroke-linejoin="round"/></svg>
</body>
</html>
